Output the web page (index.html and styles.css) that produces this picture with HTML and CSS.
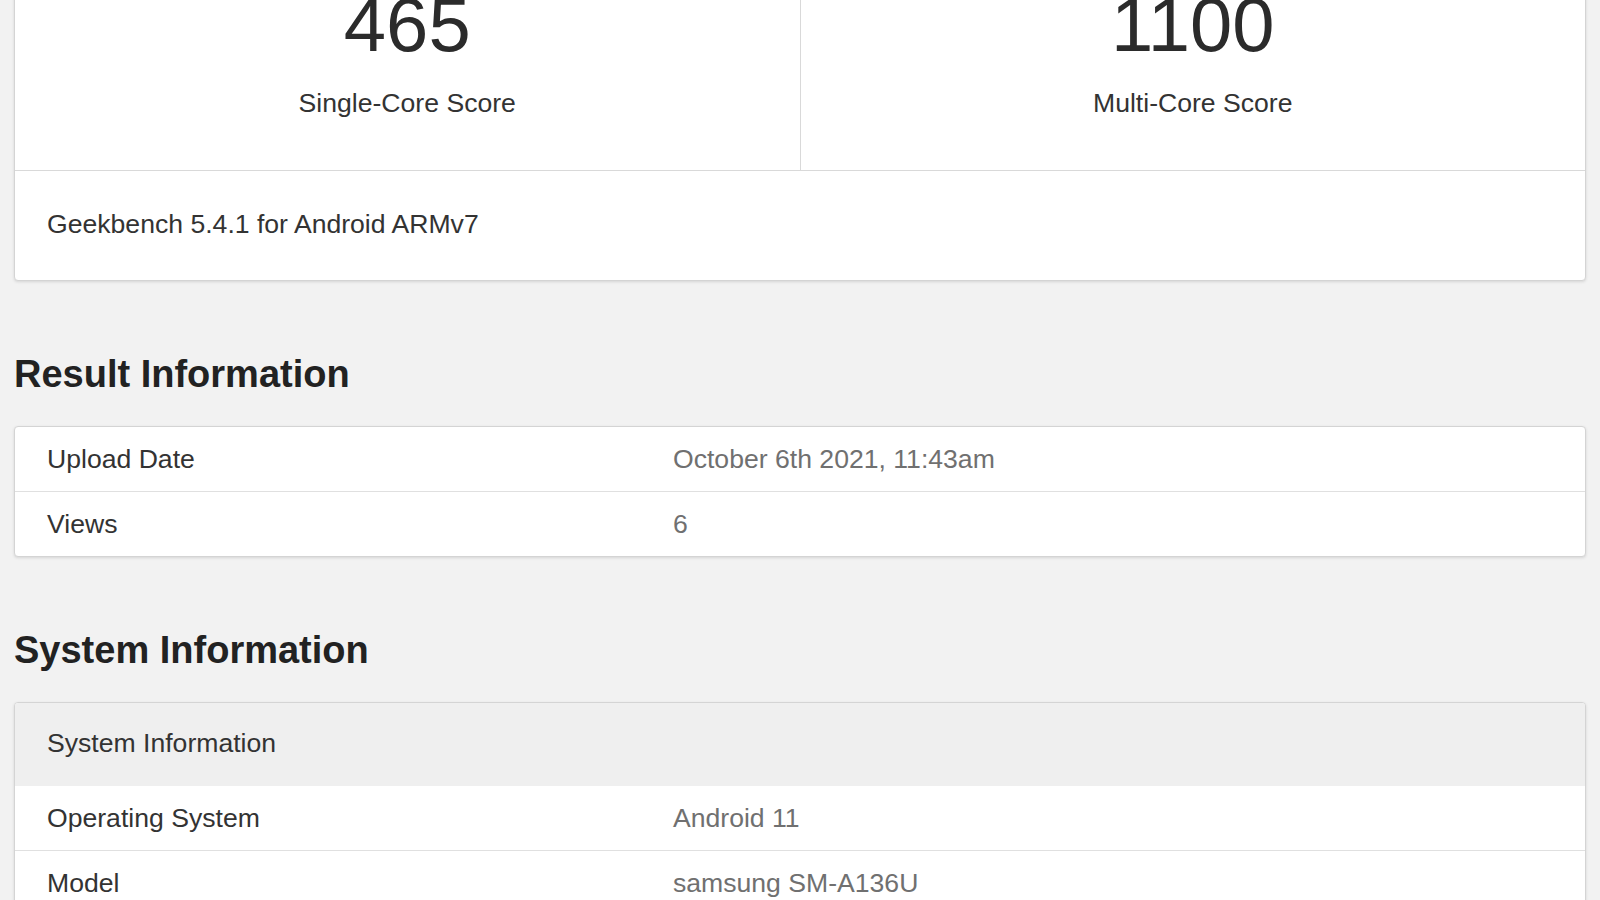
FILE: index.html
```html
<!DOCTYPE html>
<html>
<head>
  <title>Samsung SM-A136U - Geekbench Browser</title>
  <link rel="stylesheet" href="styles.css">
</head>
<body>
  <div class="page">
    <div class="card">
      <div class="scores">
        <div class="score-cell">
          <div class="score">465</div>
          <div class="score-title">Single-Core Score</div>
        </div>
        <div class="score-cell">
          <div class="score">1100</div>
          <div class="score-title">Multi-Core Score</div>
        </div>
      </div>
      <div class="card-footer">Geekbench 5.4.1 for Android ARMv7</div>
    </div>

    <h2>Result Information</h2>
    <div class="card">
      <table class="info-table">
        <tr>
          <td class="name">Upload Date</td>
          <td class="value">October 6th 2021, 11:43am</td>
        </tr>
        <tr>
          <td class="name">Views</td>
          <td class="value">6</td>
        </tr>
      </table>
    </div>

    <h2>System Information</h2>
    <div class="card">
      <table class="info-table">
        <tr class="heading">
          <th colspan="2">System Information</th>
        </tr>
        <tr>
          <td class="name">Operating System</td>
          <td class="value">Android 11</td>
        </tr>
        <tr>
          <td class="name">Model</td>
          <td class="value">samsung SM-A136U</td>
        </tr>
        <tr>
          <td class="name">Model ID</td>
          <td class="value">samsung SM-A136U</td>
        </tr>
      </table>
    </div>
  </div>
</body>
</html>
```

FILE: styles.css
```css
body {
  margin: 0;
  background-color: #f2f2f2;
  font-family: "Liberation Sans", Arial, sans-serif;
  font-size: 26.6px;
  line-height: 36px;
  color: #333333;
}

.page {
  padding: 0 14px;
  margin-top: -42px;
}

.card {
  background-color: #fff;
  border: 1px solid #d4d4d4;
  border-radius: 4px;
  box-shadow: 0 1px 3px rgba(0, 0, 0, 0.12);
  overflow: hidden;
}

.scores {
  display: flex;
  border-bottom: 1px solid #d9d9d9;
}

.score-cell {
  flex: 1;
  text-align: center;
  padding: 28px 0 49px;
}

.score-cell + .score-cell {
  border-left: 1px solid #d9d9d9;
}

.score {
  font-size: 76px;
  line-height: 76px;
  color: #2b2b2b;
}

.score-title {
  margin-top: 22px;
  color: #333333;
}

.card-footer {
  padding: 35px 32px 38px;
}

h2 {
  margin: 70px 0 29px;
  font-size: 38px;
  line-height: 46px;
  font-weight: bold;
  color: #222222;
}

.info-table {
  width: 100%;
  border-collapse: collapse;
}

.info-table td,
.info-table th {
  padding: 14px 32px;
  text-align: left;
  font-weight: normal;
}

.info-table tr + tr td {
  border-top: 1px solid #e0e0e0;
}

.info-table .name {
  width: 40%;
  padding-right: 30px;
  color: #333333;
}

.info-table .value {
  padding-left: 30px;
  color: #707070;
}

.info-table .heading th {
  background-color: #efefef;
  padding-top: 22px;
  padding-bottom: 25px;
}

.info-table .heading + tr td {
  border-top: none;
}
```
